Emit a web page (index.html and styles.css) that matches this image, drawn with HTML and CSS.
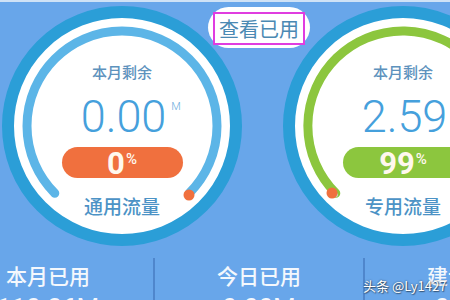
FILE: index.html
```html
<!DOCTYPE html>
<html lang="zh">
<head>
<meta charset="utf-8">
<title>流量</title>
<link rel="stylesheet" href="styles.css">
</head>
<body>
<div class="screen">
  <div class="gauges">
    <div class="gauge">
      <svg class="ring" viewBox="0 0 240 240" width="240" height="240">
        <circle cx="120" cy="120" r="114" fill="#ffffff" stroke="#2b9ed7" stroke-width="12"/>
        <path d="M52.8 187.2 A95 95 0 1 1 187.2 187.2" fill="none" stroke="#5cb5e7" stroke-width="9" stroke-linecap="round"/>
        <circle cx="187" cy="189" r="5.5" fill="#f0703e"/>
      </svg>
      <div class="gauge-body">
        <div class="g-label">本月剩余</div>
        <div class="g-value"><span class="num">0.00<span class="unit">M</span></span></div>
        <div class="pill pill-orange"><span class="pct">0</span><span class="pct-sign">%</span></div>
        <div class="g-name">通用流量</div>
      </div>
    </div>
    <div class="gauge">
      <svg class="ring" viewBox="0 0 240 240" width="240" height="240">
        <circle cx="120" cy="120" r="114" fill="#ffffff" stroke="#2b9ed7" stroke-width="12"/>
        <path d="M52.8 187.2 A95 95 0 1 1 184 190" fill="none" stroke="#8cc63e" stroke-width="9" stroke-linecap="round"/>
        <circle cx="53" cy="189" r="2" fill="#c9cfd6"/>
        <circle cx="49" cy="187" r="5.5" fill="#f0703e"/>
      </svg>
      <div class="gauge-body">
        <div class="g-label">本月剩余</div>
        <div class="g-value"><span class="num">2.59<span class="unit">G</span></span></div>
        <div class="pill pill-green"><span class="pct">99</span><span class="pct-sign">%</span></div>
        <div class="g-name">专用流量</div>
      </div>
    </div>
  </div>
  <div class="view-used"><span class="view-used-box">查看已用</span></div>
  <div class="stats">
    <div class="stat">
      <div class="s-label">本月已用</div>
      <div class="s-value">110.36M</div>
    </div>
    <div class="stat">
      <div class="s-label">今日已用</div>
      <div class="s-value">0.00M</div>
    </div>
    <div class="stat">
      <div class="s-label">建议日均</div>
      <div class="s-value">0.18G</div>
    </div>
  </div>
  <div class="watermark">头条 @Ly1427</div>
</div>
</body>
</html>
```
FILE: styles.css
```css
html, body {
  margin: 0;
  padding: 0;
}
body {
  width: 450px;
  height: 300px;
  overflow: hidden;
  background: #68a6ea;
  font-family: "Noto Sans CJK SC", "Noto Sans", sans-serif;
}
.screen {
  position: relative;
  width: 450px;
  height: 300px;
  overflow: hidden;
  border-top: 2px solid #cfe2f6;
  box-sizing: border-box;
}
.gauges {
  display: flex;
  gap: 41px;
  padding-top: 4px;
  margin-left: 2px;
}
.gauge {
  position: relative;
  flex: 0 0 240px;
  width: 240px;
  height: 240px;
}
.ring {
  position: absolute;
  left: 0;
  top: 0;
}
.gauge-body {
  position: relative;
  display: flex;
  flex-direction: column;
  align-items: center;
  padding-top: 57px;
}
.g-label {
  font-size: 15px;
  line-height: 18px;
  font-weight: 500;
  color: #5d92bd;
}
.g-value {
  margin-top: 13px;
  height: 45px;
  line-height: 45px;
  font-family: Roboto, "Liberation Sans", sans-serif;
  font-weight: 300;
  font-size: 45px;
  color: #45a0dc;
}
.num {
  position: relative;
  display: inline-block;
  margin-left: 3px;
}
.unit {
  position: absolute;
  left: 100%;
  top: 0;
  margin-left: 5px;
  font-size: 11px;
  line-height: 14px;
  margin-top: 6px;
  color: #6aaedd;
}
.pill {
  margin-top: 8px;
  width: 121px;
  height: 31px;
  border-radius: 16px;
  display: flex;
  justify-content: center;
  align-items: flex-start;
  color: #fff8ee;
  font-family: Roboto, "Liberation Sans", sans-serif;
  font-weight: 700;
}
.pill-orange {
  background: #f0703e;
}
.pill-green {
  background: #8cc63e;
}
.pct {
  font-size: 31px;
  line-height: 31px;
  margin-top: 1px;
}
.pct-sign {
  font-size: 15px;
  line-height: 15px;
  font-weight: 500;
  margin-top: 5px;
  margin-left: 1px;
}
.g-name {
  margin-top: 17px;
  font-size: 19px;
  line-height: 22px;
  font-weight: 500;
  color: #4c93c6;
}
.view-used {
  position: absolute;
  left: 208px;
  top: 5px;
  width: 102px;
  height: 41px;
  border-radius: 21px;
  background: #ffffff;
  display: flex;
  align-items: center;
  justify-content: center;
}
.view-used-box {
  box-sizing: border-box;
  width: 92px;
  height: 33px;
  margin-top: 2px;
  border: 2px solid #e03de0;
  display: flex;
  align-items: center;
  justify-content: center;
  font-size: 20px;
  line-height: 24px;
  color: #4b89b3;
}
.stats {
  display: flex;
  margin-top: 12px;
  margin-left: -57px;
}
.stat {
  flex: 0 0 210px;
  box-sizing: border-box;
  display: flex;
  flex-direction: column;
  align-items: center;
  padding-top: 4px;
  height: 60px;
}
.stat + .stat {
  border-left: 2px solid #4f86cc;
}
.s-label {
  font-size: 21px;
  line-height: 26px;
  font-weight: 500;
  color: #f4f8fd;
}
.s-value {
  margin-top: 5px;
  font-family: Roboto, "Liberation Sans", sans-serif;
  font-size: 26px;
  line-height: 30px;
  color: #f4f8fd;
}
.watermark {
  position: absolute;
  left: 363px;
  top: 276px;
  font-size: 13px;
  line-height: 16px;
  color: #ffffff;
  text-shadow: 0 0 2px rgba(0, 0, 0, 0.6), 1px 1px 1px rgba(0, 0, 0, 0.4);
  white-space: nowrap;
}
```
